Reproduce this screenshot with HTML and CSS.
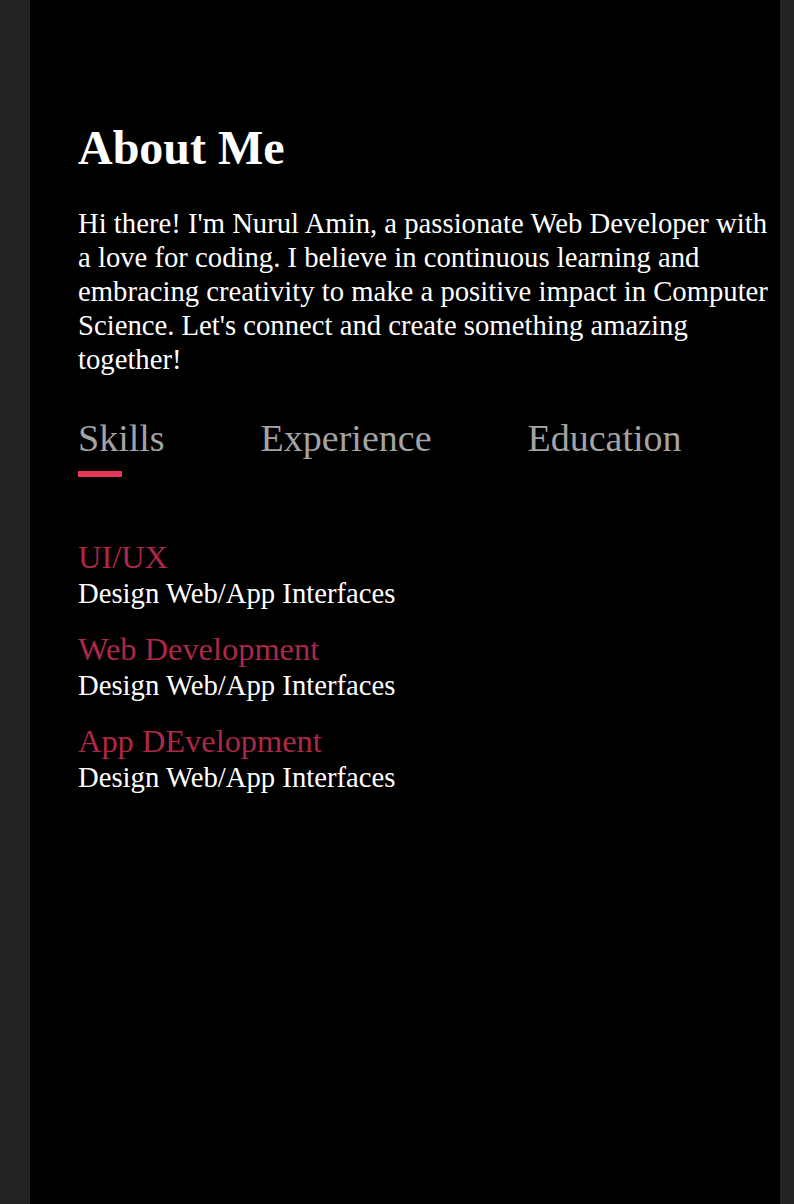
FILE: index.html
```html
<!DOCTYPE html>
<html lang="en">
<head>
<meta charset="utf-8">
<title>About Me</title>
<link rel="stylesheet" href="styles.css">
</head>
<body>
<main class="page">
  <section class="about">
    <h1 class="about-title">About Me</h1>
    <p class="about-text">Hi there! I'm Nurul Amin, a passionate Web Developer with a love for coding. I believe in continuous learning and embracing creativity to make a positive impact in Computer Science. Let's connect and create something amazing together!</p>
    <nav class="tabs">
      <span class="tab active">Skills</span>
      <span class="tab">Experience</span>
      <span class="tab">Education</span>
    </nav>
    <ul class="skills">
      <li class="skill"><span class="skill-name">UI/UX</span><span class="skill-desc">Design Web/App Interfaces</span></li>
      <li class="skill"><span class="skill-name">Web Development</span><span class="skill-desc">Design Web/App Interfaces</span></li>
      <li class="skill"><span class="skill-name">App DEvelopment</span><span class="skill-desc">Design Web/App Interfaces</span></li>
    </ul>
  </section>
</main>
</body>
</html>
```

FILE: styles.css
```css
html, body {
  margin: 0;
  padding: 0;
}

body {
  background: #232324;
  font-family: "Liberation Serif", "Times New Roman", serif;
  color: #ffffff;
}

.page {
  margin-left: 30px;
  width: 750px;
  min-height: 1204px;
  background: #000000;
}

.about {
  padding: 121px 0 0 48px;
}

.about-title {
  margin: 0;
  font-size: 48px;
  line-height: 54px;
  font-weight: bold;
}

.about-text {
  margin: 31px 0 0 0;
  font-size: 28.7px;
  line-height: 34px;
  width: 700px;
}

.tabs {
  display: flex;
  gap: 96px;
  margin-top: 40px;
}

.tab {
  font-size: 38px;
  line-height: 44px;
  color: #a3a3a3;
}

.tab.active::after {
  content: "";
  display: block;
  width: 44px;
  height: 6px;
  margin-top: 11px;
  background: #e63557;
}

.skills {
  list-style: none;
  margin: 61px 0 0 0;
  padding: 0;
  display: flex;
  flex-direction: column;
  gap: 20px;
}

.skill {
  display: flex;
  flex-direction: column;
}

.skill-name {
  font-size: 32.4px;
  line-height: 38px;
  color: #ad2749;
}

.skill-desc {
  font-size: 28.7px;
  line-height: 34px;
}
```
